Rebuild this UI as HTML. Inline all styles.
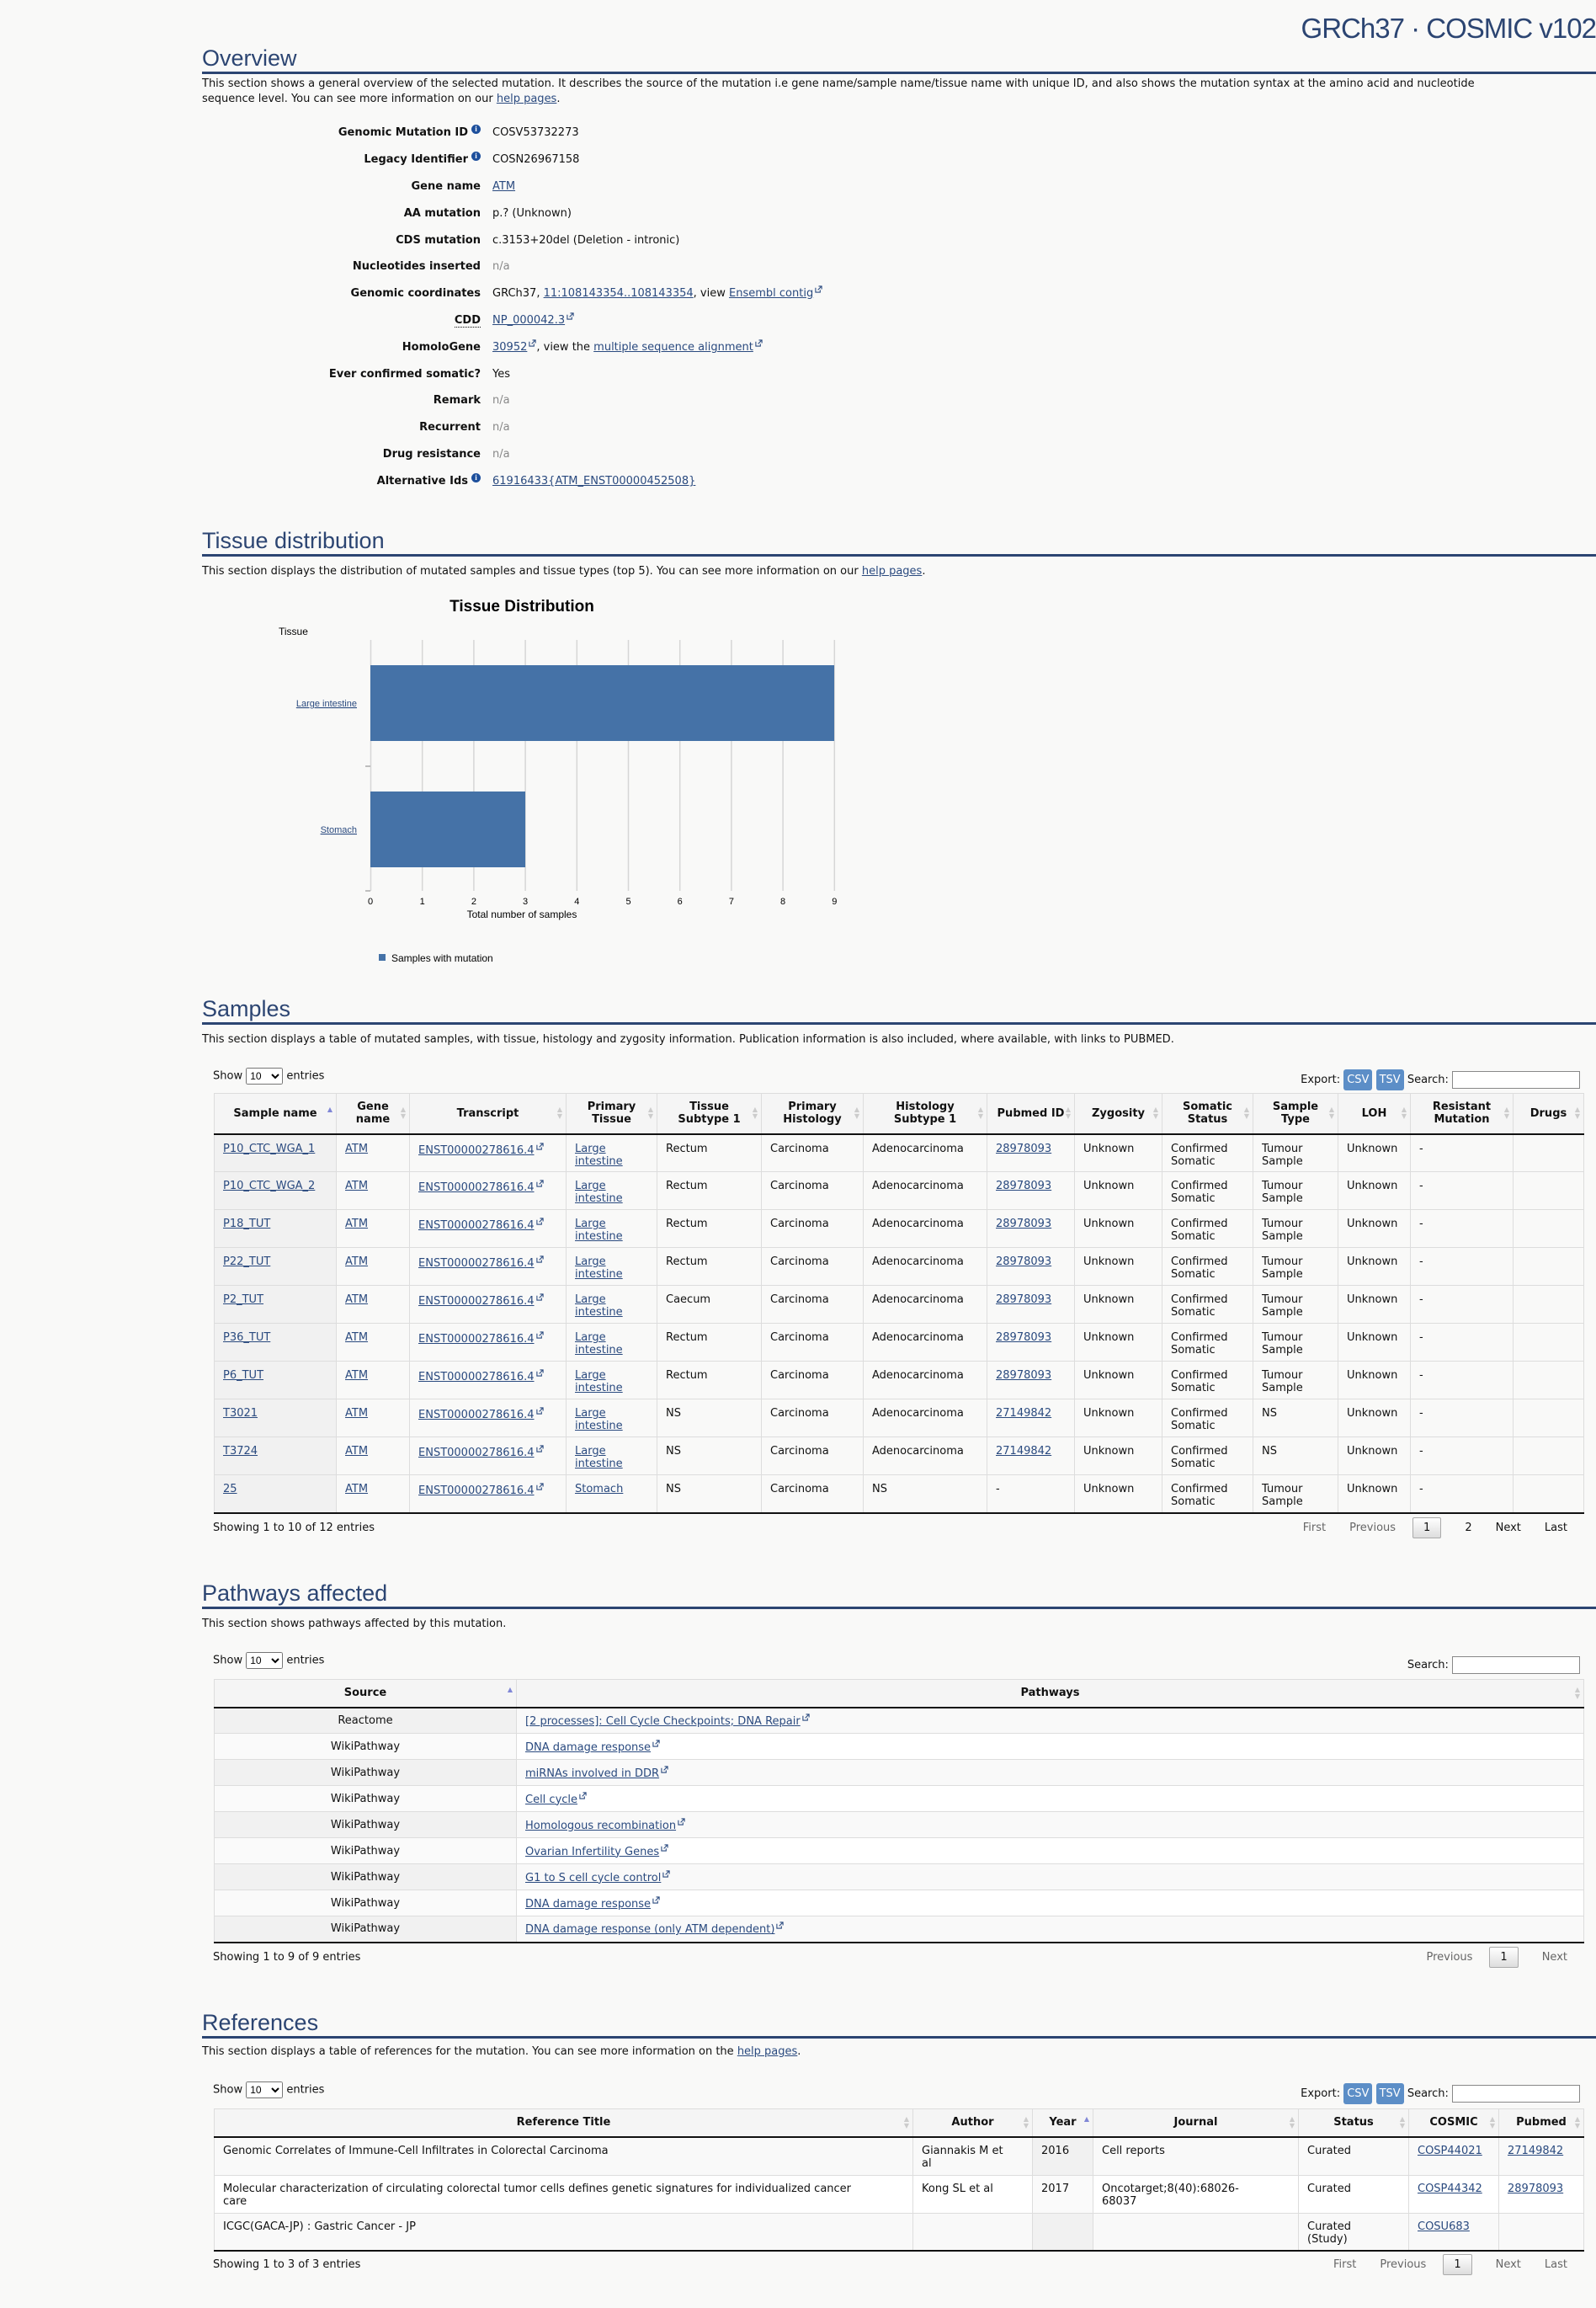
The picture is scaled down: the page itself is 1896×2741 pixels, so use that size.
<!DOCTYPE html>
<html><head><meta charset="utf-8">
<style>
*{box-sizing:border-box;margin:0;padding:0}
html,body{width:1896px;height:2741px;background:#f9f9f8;overflow:hidden}
body{position:relative;font-family:"DejaVu Sans","Liberation Sans",sans-serif;font-size:13px;color:#111}
a{color:#2a4a7f;text-decoration:underline}
.abs{position:absolute}
.title{position:absolute;right:0;top:15px;font-family:"Liberation Sans",sans-serif;font-size:33px;color:#2c4572;white-space:nowrap;letter-spacing:-1px}
.h{position:absolute;left:240px;width:1656px;height:35px;border-bottom:3px solid #2c4572;font-family:"Liberation Sans",sans-serif;font-size:27px;line-height:32px;color:#2c4572}
.desc{position:absolute;left:240px;width:1650px;line-height:18px;font-size:13px}
.row{position:absolute;left:240px;height:20px;line-height:20px;white-space:nowrap}
.lab{position:absolute;width:331px;left:0;text-align:right;font-weight:bold}
.val{position:absolute;left:345px}
.na{color:#888}
.info{display:inline-block;width:11px;height:11px;border-radius:50%;background:#1d4f9c;color:#fff;font-size:9px;line-height:11px;text-align:center;font-weight:bold;vertical-align:5px;margin-left:4px;font-family:"Liberation Serif",serif}
.ext{display:inline-block;width:9px;height:9px;vertical-align:4px;margin-left:2px}
table{border-collapse:collapse;table-layout:fixed;position:absolute;left:254px;width:1627px;font-size:13px}
th{font-weight:bold;text-align:center;border-right:1px solid #ddd;border-top:1px solid #ddd;background:#f5f5f5;vertical-align:middle;line-height:15px;padding:0 10px;position:relative}
th:first-child{border-left:1px solid #ddd}
thead tr{border-bottom:2px solid #111}
td{border-right:1px solid #ddd;border-bottom:1px solid #ddd;vertical-align:top;padding:0 10px;line-height:15px}
td:first-child{border-left:1px solid #ddd}
tbody tr:last-child td{border-bottom:2px solid #111}
.s1 td{padding-top:9px}
.s1 td:first-child{background:#f1f1f1}
.sort{position:absolute;right:4px;top:50%;margin-top:-8px;font-size:8px;line-height:8px;color:#ccc}
.sort.on{color:#8087d6}
.small{font-size:13px;position:absolute;white-space:nowrap}
select{font-size:12px;height:20px;width:44px;vertical-align:middle}
.btn{display:inline-block;background:#5c8ec7;color:#fff;border-radius:3px;padding:0 4px;height:25px;line-height:25px;vertical-align:middle}
.inp{display:inline-block;width:152px;height:21px;border:1px solid #888;background:#fff;vertical-align:middle}
.pg{position:absolute;white-space:nowrap;color:#666}
.pg span{display:inline-block;margin-left:28px}
.pg .cur{border:1px solid #aaa;background:linear-gradient(#fff,#ddd);padding:4px 12px;border-radius:2px;color:#111;margin-left:20px}
.pg .blk{color:#111}
</style></head><body>

<div class="title">GRCh37 · COSMIC v102</div>

<div class="h" style="top:53px">Overview</div>
<div class="desc" style="top:91px">This section shows a general overview of the selected mutation. It describes the source of the mutation i.e gene name/sample name/tissue name with unique ID, and also shows the mutation syntax at the amino acid and nucleotide<br>sequence level. You can see more information on our <a>help pages</a>.</div>

<div class="row" style="top:148px"><span class="lab">Genomic Mutation ID<span class="info">i</span></span><span class="val">COSV53732273</span></div>
<div class="row" style="top:180px"><span class="lab">Legacy Identifier<span class="info">i</span></span><span class="val">COSN26967158</span></div>
<div class="row" style="top:212px"><span class="lab">Gene name</span><span class="val"><a>ATM</a></span></div>
<div class="row" style="top:244px"><span class="lab">AA mutation</span><span class="val">p.? (Unknown)</span></div>
<div class="row" style="top:276px"><span class="lab">CDS mutation</span><span class="val">c.3153+20del (Deletion - intronic)</span></div>
<div class="row" style="top:307px"><span class="lab">Nucleotides inserted</span><span class="val na">n/a</span></div>
<div class="row" style="top:339px"><span class="lab">Genomic coordinates</span><span class="val">GRCh37, <a>11:108143354..108143354</a>, view <a>Ensembl contig</a><svg class="ext" viewBox="0 0 10 10"><path d="M1 3v6h6V6M5 1h4v4M9 1L4 6" fill="none" stroke="#2a4a7f" stroke-width="1.2"/></svg></span></div>
<div class="row" style="top:371px"><span class="lab"><span style="border-bottom:1px dotted #111">CDD</span></span><span class="val"><a>NP_000042.3</a><svg class="ext" viewBox="0 0 10 10"><path d="M1 3v6h6V6M5 1h4v4M9 1L4 6" fill="none" stroke="#2a4a7f" stroke-width="1.2"/></svg></span></div>
<div class="row" style="top:403px"><span class="lab">HomoloGene</span><span class="val"><a>30952</a><svg class="ext" viewBox="0 0 10 10"><path d="M1 3v6h6V6M5 1h4v4M9 1L4 6" fill="none" stroke="#2a4a7f" stroke-width="1.2"/></svg>, view the <a>multiple sequence alignment</a><svg class="ext" viewBox="0 0 10 10"><path d="M1 3v6h6V6M5 1h4v4M9 1L4 6" fill="none" stroke="#2a4a7f" stroke-width="1.2"/></svg></span></div>
<div class="row" style="top:435px"><span class="lab">Ever confirmed somatic?</span><span class="val">Yes</span></div>
<div class="row" style="top:466px"><span class="lab">Remark</span><span class="val na">n/a</span></div>
<div class="row" style="top:498px"><span class="lab">Recurrent</span><span class="val na">n/a</span></div>
<div class="row" style="top:530px"><span class="lab">Drug resistance</span><span class="val na">n/a</span></div>
<div class="row" style="top:562px"><span class="lab">Alternative Ids<span class="info">i</span></span><span class="val"><a>61916433{ATM_ENST00000452508}</a></span></div>

<div class="h" style="top:626px">Tissue distribution</div>
<div class="desc" style="top:670px">This section displays the distribution of mutated samples and tissue types (top 5). You can see more information on our <a>help pages</a>.</div>

<svg class="abs" style="left:0;top:0" width="1896" height="1200" viewBox="0 0 1896 1200" font-family="Liberation Sans, Arial, sans-serif">
<text x="620" y="726" font-size="19" font-weight="bold" text-anchor="middle" fill="#000">Tissue Distribution</text>
<text x="331" y="754" font-size="12" fill="#000">Tissue</text>
<g stroke="#d6d6d6" stroke-width="1.5">
<line x1="440.5" y1="760" x2="440.5" y2="1058"/><line x1="501.7" y1="760" x2="501.7" y2="1058"/><line x1="562.9" y1="760" x2="562.9" y2="1058"/><line x1="624.1" y1="760" x2="624.1" y2="1058"/><line x1="685.3" y1="760" x2="685.3" y2="1058"/><line x1="746.5" y1="760" x2="746.5" y2="1058"/><line x1="807.7" y1="760" x2="807.7" y2="1058"/><line x1="868.9" y1="760" x2="868.9" y2="1058"/><line x1="930.1" y1="760" x2="930.1" y2="1058"/><line x1="991.3" y1="760" x2="991.3" y2="1058"/>
</g>
<line x1="434" y1="910" x2="440" y2="910" stroke="#aaa" stroke-width="1.5"/>
<line x1="434" y1="1058" x2="440" y2="1058" stroke="#aaa" stroke-width="1.5"/>
<rect x="440" y="790" width="551" height="90" fill="#4572a7"/>
<rect x="440" y="940" width="184" height="90" fill="#4572a7"/>
<text x="424" y="839" font-size="11" text-anchor="end" fill="#2a4a7f" text-decoration="underline">Large intestine</text>
<text x="424" y="989" font-size="11" text-anchor="end" fill="#2a4a7f" text-decoration="underline">Stomach</text>
<g font-size="11" text-anchor="middle" fill="#000">
<text x="440" y="1074">0</text><text x="501.7" y="1074">1</text><text x="562.9" y="1074">2</text><text x="624.1" y="1074">3</text><text x="685.3" y="1074">4</text><text x="746.5" y="1074">5</text><text x="807.7" y="1074">6</text><text x="868.9" y="1074">7</text><text x="930.1" y="1074">8</text><text x="991.3" y="1074">9</text>
<text x="620" y="1090" font-size="12">Total number of samples</text>
</g>
<rect x="450" y="1133" width="8" height="8" fill="#4572a7"/>
<text x="465" y="1142" font-size="12" fill="#000">Samples with mutation</text>
</svg>

<div class="h" style="top:1182px">Samples</div>
<div class="desc" style="top:1226px">This section displays a table of mutated samples, with tissue, histology and zygosity information. Publication information is also included, where available, with links to PUBMED.</div>

<div class="small" style="left:253px;top:1268px">Show <select><option>10</option></select> entries</div>
<div class="small" style="right:19px;top:1270px">Export: <span class="btn">CSV</span> <span class="btn">TSV</span> Search: <span class="inp"></span></div>

<table style="top:1298px">
<colgroup><col style="width:145px"><col style="width:87px"><col style="width:186px"><col style="width:108px"><col style="width:124px"><col style="width:121px"><col style="width:147px"><col style="width:104px"><col style="width:104px"><col style="width:108px"><col style="width:101px"><col style="width:86px"><col style="width:122px"><col style="width:84px"></colgroup>
<thead><tr style="height:48px"><th>Sample name<span class="sort on">▲</span></th><th>Gene name<span class="sort">▲<br>▼</span></th><th>Transcript<span class="sort">▲<br>▼</span></th><th>Primary Tissue<span class="sort">▲<br>▼</span></th><th>Tissue Subtype 1<span class="sort">▲<br>▼</span></th><th>Primary Histology<span class="sort">▲<br>▼</span></th><th>Histology Subtype 1<span class="sort">▲<br>▼</span></th><th>Pubmed ID<span class="sort">▲<br>▼</span></th><th>Zygosity<span class="sort">▲<br>▼</span></th><th>Somatic Status<span class="sort">▲<br>▼</span></th><th>Sample Type<span class="sort">▲<br>▼</span></th><th>LOH<span class="sort">▲<br>▼</span></th><th>Resistant Mutation<span class="sort">▲<br>▼</span></th><th>Drugs<span class="sort">▲<br>▼</span></th></tr></thead>
<tbody class="s1">
<tr style="height:45px"><td><a>P10_CTC_WGA_1</a></td><td><a>ATM</a></td><td><a>ENST00000278616.4</a><svg class="ext" viewBox="0 0 10 10"><path d="M1 3v6h6V6M5 1h4v4M9 1L4 6" fill="none" stroke="#2a4a7f" stroke-width="1.2"/></svg></td><td><a>Large intestine</a></td><td>Rectum</td><td>Carcinoma</td><td>Adenocarcinoma</td><td><a>28978093</a></td><td>Unknown</td><td>Confirmed Somatic</td><td>Tumour Sample</td><td>Unknown</td><td>-</td><td></td></tr>
<tr style="height:45px"><td><a>P10_CTC_WGA_2</a></td><td><a>ATM</a></td><td><a>ENST00000278616.4</a><svg class="ext" viewBox="0 0 10 10"><path d="M1 3v6h6V6M5 1h4v4M9 1L4 6" fill="none" stroke="#2a4a7f" stroke-width="1.2"/></svg></td><td><a>Large intestine</a></td><td>Rectum</td><td>Carcinoma</td><td>Adenocarcinoma</td><td><a>28978093</a></td><td>Unknown</td><td>Confirmed Somatic</td><td>Tumour Sample</td><td>Unknown</td><td>-</td><td></td></tr>
<tr style="height:45px"><td><a>P18_TUT</a></td><td><a>ATM</a></td><td><a>ENST00000278616.4</a><svg class="ext" viewBox="0 0 10 10"><path d="M1 3v6h6V6M5 1h4v4M9 1L4 6" fill="none" stroke="#2a4a7f" stroke-width="1.2"/></svg></td><td><a>Large intestine</a></td><td>Rectum</td><td>Carcinoma</td><td>Adenocarcinoma</td><td><a>28978093</a></td><td>Unknown</td><td>Confirmed Somatic</td><td>Tumour Sample</td><td>Unknown</td><td>-</td><td></td></tr>
<tr style="height:45px"><td><a>P22_TUT</a></td><td><a>ATM</a></td><td><a>ENST00000278616.4</a><svg class="ext" viewBox="0 0 10 10"><path d="M1 3v6h6V6M5 1h4v4M9 1L4 6" fill="none" stroke="#2a4a7f" stroke-width="1.2"/></svg></td><td><a>Large intestine</a></td><td>Rectum</td><td>Carcinoma</td><td>Adenocarcinoma</td><td><a>28978093</a></td><td>Unknown</td><td>Confirmed Somatic</td><td>Tumour Sample</td><td>Unknown</td><td>-</td><td></td></tr>
<tr style="height:45px"><td><a>P2_TUT</a></td><td><a>ATM</a></td><td><a>ENST00000278616.4</a><svg class="ext" viewBox="0 0 10 10"><path d="M1 3v6h6V6M5 1h4v4M9 1L4 6" fill="none" stroke="#2a4a7f" stroke-width="1.2"/></svg></td><td><a>Large intestine</a></td><td>Caecum</td><td>Carcinoma</td><td>Adenocarcinoma</td><td><a>28978093</a></td><td>Unknown</td><td>Confirmed Somatic</td><td>Tumour Sample</td><td>Unknown</td><td>-</td><td></td></tr>
<tr style="height:45px"><td><a>P36_TUT</a></td><td><a>ATM</a></td><td><a>ENST00000278616.4</a><svg class="ext" viewBox="0 0 10 10"><path d="M1 3v6h6V6M5 1h4v4M9 1L4 6" fill="none" stroke="#2a4a7f" stroke-width="1.2"/></svg></td><td><a>Large intestine</a></td><td>Rectum</td><td>Carcinoma</td><td>Adenocarcinoma</td><td><a>28978093</a></td><td>Unknown</td><td>Confirmed Somatic</td><td>Tumour Sample</td><td>Unknown</td><td>-</td><td></td></tr>
<tr style="height:45px"><td><a>P6_TUT</a></td><td><a>ATM</a></td><td><a>ENST00000278616.4</a><svg class="ext" viewBox="0 0 10 10"><path d="M1 3v6h6V6M5 1h4v4M9 1L4 6" fill="none" stroke="#2a4a7f" stroke-width="1.2"/></svg></td><td><a>Large intestine</a></td><td>Rectum</td><td>Carcinoma</td><td>Adenocarcinoma</td><td><a>28978093</a></td><td>Unknown</td><td>Confirmed Somatic</td><td>Tumour Sample</td><td>Unknown</td><td>-</td><td></td></tr>
<tr style="height:45px"><td><a>T3021</a></td><td><a>ATM</a></td><td><a>ENST00000278616.4</a><svg class="ext" viewBox="0 0 10 10"><path d="M1 3v6h6V6M5 1h4v4M9 1L4 6" fill="none" stroke="#2a4a7f" stroke-width="1.2"/></svg></td><td><a>Large intestine</a></td><td>NS</td><td>Carcinoma</td><td>Adenocarcinoma</td><td><a>27149842</a></td><td>Unknown</td><td>Confirmed Somatic</td><td>NS</td><td>Unknown</td><td>-</td><td></td></tr>
<tr style="height:45px"><td><a>T3724</a></td><td><a>ATM</a></td><td><a>ENST00000278616.4</a><svg class="ext" viewBox="0 0 10 10"><path d="M1 3v6h6V6M5 1h4v4M9 1L4 6" fill="none" stroke="#2a4a7f" stroke-width="1.2"/></svg></td><td><a>Large intestine</a></td><td>NS</td><td>Carcinoma</td><td>Adenocarcinoma</td><td><a>27149842</a></td><td>Unknown</td><td>Confirmed Somatic</td><td>NS</td><td>Unknown</td><td>-</td><td></td></tr>
<tr style="height:45px"><td><a>25</a></td><td><a>ATM</a></td><td><a>ENST00000278616.4</a><svg class="ext" viewBox="0 0 10 10"><path d="M1 3v6h6V6M5 1h4v4M9 1L4 6" fill="none" stroke="#2a4a7f" stroke-width="1.2"/></svg></td><td><a>Stomach</a></td><td>NS</td><td>Carcinoma</td><td>NS</td><td>-</td><td>Unknown</td><td>Confirmed Somatic</td><td>Tumour Sample</td><td>Unknown</td><td>-</td><td></td></tr>
</tbody></table>

<div class="small" style="left:253px;top:1807px">Showing 1 to 10 of 12 entries</div>
<div class="pg" style="right:34px;top:1802px"><span>First</span><span>Previous</span><span class="cur">1</span><span class="blk">2</span><span class="blk">Next</span><span class="blk">Last</span></div>

<div class="h" style="top:1876px">Pathways affected</div>
<div class="desc" style="top:1920px">This section shows pathways affected by this mutation.</div>
<div class="small" style="left:253px;top:1962px">Show <select><option>10</option></select> entries</div>
<div class="small" style="right:19px;top:1967px">Search: <span class="inp"></span></div>

<table style="top:1994px">
<colgroup><col style="width:359px"><col style="width:1268px"></colgroup>
<thead><tr style="height:33px"><th>Source<span class="sort on">▲</span></th><th>Pathways<span class="sort">▲<br>▼</span></th></tr></thead>
<tbody>
<tr style="height:31px;background:#f9f9f9"><td style="text-align:center;background:#f1f1f1;vertical-align:middle">Reactome</td><td style="vertical-align:middle"><a>[2 processes]: Cell Cycle Checkpoints; DNA Repair</a><svg class="ext" viewBox="0 0 10 10"><path d="M1 3v6h6V6M5 1h4v4M9 1L4 6" fill="none" stroke="#2a4a7f" stroke-width="1.2"/></svg></td></tr>
<tr style="height:31px;background:#fff"><td style="text-align:center;background:#fafafa;vertical-align:middle">WikiPathway</td><td style="vertical-align:middle"><a>DNA damage response</a><svg class="ext" viewBox="0 0 10 10"><path d="M1 3v6h6V6M5 1h4v4M9 1L4 6" fill="none" stroke="#2a4a7f" stroke-width="1.2"/></svg></td></tr>
<tr style="height:31px;background:#f9f9f9"><td style="text-align:center;background:#f1f1f1;vertical-align:middle">WikiPathway</td><td style="vertical-align:middle"><a>miRNAs involved in DDR</a><svg class="ext" viewBox="0 0 10 10"><path d="M1 3v6h6V6M5 1h4v4M9 1L4 6" fill="none" stroke="#2a4a7f" stroke-width="1.2"/></svg></td></tr>
<tr style="height:31px;background:#fff"><td style="text-align:center;background:#fafafa;vertical-align:middle">WikiPathway</td><td style="vertical-align:middle"><a>Cell cycle</a><svg class="ext" viewBox="0 0 10 10"><path d="M1 3v6h6V6M5 1h4v4M9 1L4 6" fill="none" stroke="#2a4a7f" stroke-width="1.2"/></svg></td></tr>
<tr style="height:31px;background:#f9f9f9"><td style="text-align:center;background:#f1f1f1;vertical-align:middle">WikiPathway</td><td style="vertical-align:middle"><a>Homologous recombination</a><svg class="ext" viewBox="0 0 10 10"><path d="M1 3v6h6V6M5 1h4v4M9 1L4 6" fill="none" stroke="#2a4a7f" stroke-width="1.2"/></svg></td></tr>
<tr style="height:31px;background:#fff"><td style="text-align:center;background:#fafafa;vertical-align:middle">WikiPathway</td><td style="vertical-align:middle"><a>Ovarian Infertility Genes</a><svg class="ext" viewBox="0 0 10 10"><path d="M1 3v6h6V6M5 1h4v4M9 1L4 6" fill="none" stroke="#2a4a7f" stroke-width="1.2"/></svg></td></tr>
<tr style="height:31px;background:#f9f9f9"><td style="text-align:center;background:#f1f1f1;vertical-align:middle">WikiPathway</td><td style="vertical-align:middle"><a>G1 to S cell cycle control</a><svg class="ext" viewBox="0 0 10 10"><path d="M1 3v6h6V6M5 1h4v4M9 1L4 6" fill="none" stroke="#2a4a7f" stroke-width="1.2"/></svg></td></tr>
<tr style="height:31px;background:#fff"><td style="text-align:center;background:#fafafa;vertical-align:middle">WikiPathway</td><td style="vertical-align:middle"><a>DNA damage response</a><svg class="ext" viewBox="0 0 10 10"><path d="M1 3v6h6V6M5 1h4v4M9 1L4 6" fill="none" stroke="#2a4a7f" stroke-width="1.2"/></svg></td></tr>
<tr style="height:31px;background:#f9f9f9"><td style="text-align:center;background:#f1f1f1;vertical-align:middle">WikiPathway</td><td style="vertical-align:middle"><a>DNA damage response (only ATM dependent)</a><svg class="ext" viewBox="0 0 10 10"><path d="M1 3v6h6V6M5 1h4v4M9 1L4 6" fill="none" stroke="#2a4a7f" stroke-width="1.2"/></svg></td></tr>
</tbody></table>

<div class="small" style="left:253px;top:2317px">Showing 1 to 9 of 9 entries</div>
<div class="pg" style="right:34px;top:2312px"><span>Previous</span><span class="cur">1</span><span>Next</span></div>

<div class="h" style="top:2386px">References</div>
<div class="desc" style="top:2428px">This section displays a table of references for the mutation. You can see more information on the <a>help pages</a>.</div>
<div class="small" style="left:253px;top:2472px">Show <select><option>10</option></select> entries</div>
<div class="small" style="right:19px;top:2474px">Export: <span class="btn">CSV</span> <span class="btn">TSV</span> Search: <span class="inp"></span></div>

<table style="top:2504px">
<colgroup><col style="width:830px"><col style="width:142px"><col style="width:72px"><col style="width:244px"><col style="width:131px"><col style="width:107px"><col style="width:101px"></colgroup>
<thead><tr style="height:33px"><th>Reference Title<span class="sort">▲<br>▼</span></th><th>Author<span class="sort">▲<br>▼</span></th><th>Year<span class="sort on">▲</span></th><th>Journal<span class="sort">▲<br>▼</span></th><th>Status<span class="sort">▲<br>▼</span></th><th>COSMIC<span class="sort">▲<br>▼</span></th><th>Pubmed<span class="sort">▲<br>▼</span></th></tr></thead>
<tbody>
<tr style="height:46px;background:#f9f9f9"><td style="padding-top:8px">Genomic Correlates of Immune-Cell Infiltrates in Colorectal Carcinoma</td><td style="padding-top:8px;padding-right:20px">Giannakis M et al</td><td style="padding-top:8px;background:#f1f1f1">2016</td><td style="padding-top:8px">Cell reports</td><td style="padding-top:8px">Curated</td><td style="padding-top:8px"><a>COSP44021</a></td><td style="padding-top:8px"><a>27149842</a></td></tr>
<tr style="height:45px;background:#fff"><td style="padding-top:8px">Molecular characterization of circulating colorectal tumor cells defines genetic signatures for individualized cancer<br>care</td><td style="padding-top:8px">Kong SL et al</td><td style="padding-top:8px;background:#fafafa">2017</td><td style="padding-top:8px;padding-right:30px">Oncotarget;8(40):68026-68037</td><td style="padding-top:8px">Curated</td><td style="padding-top:8px"><a>COSP44342</a></td><td style="padding-top:8px"><a>28978093</a></td></tr>
<tr style="height:44px;background:#f9f9f9"><td style="padding-top:8px">ICGC(GACA-JP) : Gastric Cancer - JP</td><td></td><td style="background:#f1f1f1"></td><td></td><td style="padding-top:8px;padding-right:40px">Curated (Study)</td><td style="padding-top:8px"><a>COSU683</a></td><td></td></tr>
</tbody></table>

<div class="small" style="left:253px;top:2682px">Showing 1 to 3 of 3 entries</div>
<div class="pg" style="right:34px;top:2677px"><span>First</span><span>Previous</span><span class="cur">1</span><span>Next</span><span>Last</span></div>

</body></html>
